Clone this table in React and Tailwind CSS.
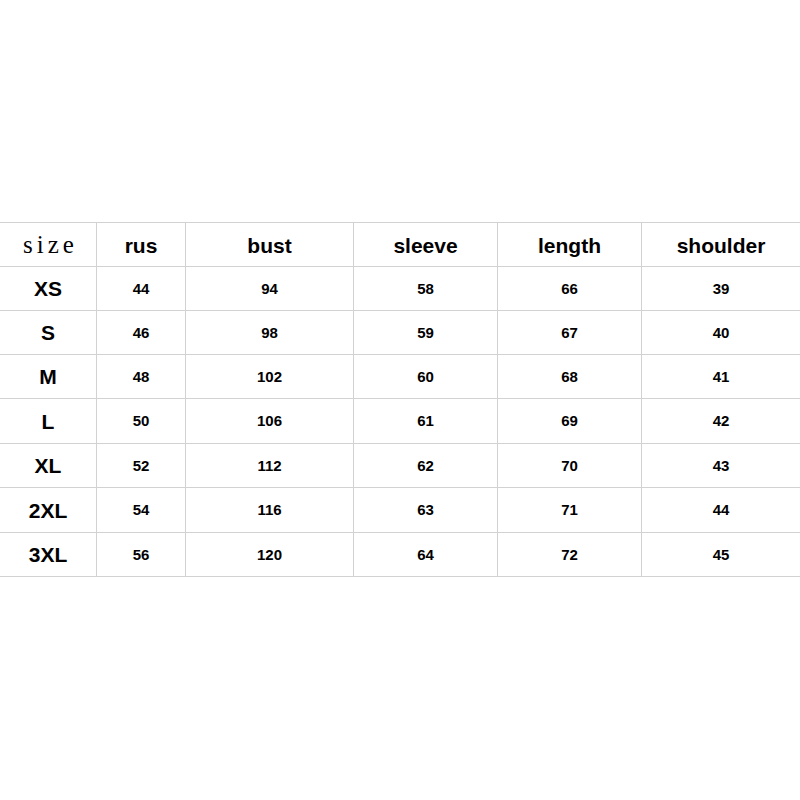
import React from "react";

const headers = ["rus", "bust", "sleeve", "length", "shoulder"];
const rows = [
  { h: "h-[44px]", c: ["XS", "44", "94", "58", "66", "39"] },
  { h: "h-[44px]", c: ["S", "46", "98", "59", "67", "40"] },
  { h: "h-[44px]", c: ["M", "48", "102", "60", "68", "41"] },
  { h: "h-[45px]", c: ["L", "50", "106", "61", "69", "42"] },
  { h: "h-[44px]", c: ["XL", "52", "112", "62", "70", "43"] },
  { h: "h-[45px]", c: ["2XL", "54", "116", "63", "71", "44"] },
  { h: "h-[44px]", c: ["3XL", "56", "120", "64", "72", "45"] },
];

const gridCols = "grid grid-cols-[97px_89px_168px_144px_144px_158px]";

export default function App() {
  return (
    <div className="w-[800px] h-[800px] bg-white pt-[222px]" style={{ fontFamily: '"Liberation Sans", Arial, sans-serif' }}>
      <div className="border-t border-[#d2d2d2] text-black">
        <div className={gridCols}>
          <div
            className="h-[44px] flex items-center justify-center border-r border-b border-[#d2d2d2] text-[25px] tracking-[4px] pl-[5px] pt-[1px]"
            style={{ fontFamily: '"Liberation Serif", "Times New Roman", serif' }}
          >
            size
          </div>
          {headers.map((h, i) => (
            <div
              key={h}
              className={`h-[44px] flex items-center justify-center border-b border-[#d2d2d2] font-bold text-[21px] pt-[2px] ${i < headers.length - 1 ? "border-r" : ""}`}
            >
              {h}
            </div>
          ))}
        </div>
        {rows.map((r) => (
          <div key={r.c[0]} className={gridCols}>
            {r.c.map((c, i) => (
              <div
                key={i}
                className={`${r.h} flex items-center justify-center border-b border-[#d2d2d2] font-bold pt-[1px] ${i === 0 ? "text-[21px]" : "text-[15px]"} ${i < r.c.length - 1 ? "border-r" : ""}`}
              >
                {c}
              </div>
            ))}
          </div>
        ))}
      </div>
    </div>
  );
}
